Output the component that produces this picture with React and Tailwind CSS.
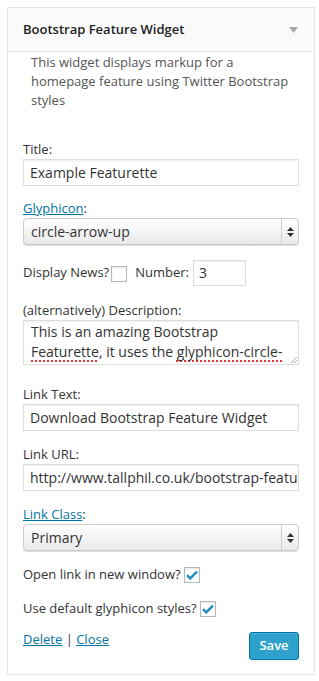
import React from 'react';

const font = { fontFamily: '"Open Sans", "Liberation Sans", sans-serif' };

const Label = ({ children, className = '' }) => (
  <div className={`text-[13px] leading-[19px] text-[#333] ${className}`}>{children}</div>
);

const TextInput = ({ value }) => (
  <div className="h-[27px] w-full border border-[#dddddd] bg-white px-[6px] text-[14px] leading-[25px] text-[#333] shadow-[inset_0_1px_2px_rgba(0,0,0,0.07)] whitespace-nowrap overflow-hidden">
    {value}
  </div>
);

const SelectBox = ({ value }) => (
  <div className="flex h-[27px] w-full items-stretch rounded-[4px] border border-[#cccccc] bg-gradient-to-b from-white to-[#e9e9e9] shadow-[0_1px_1px_rgba(0,0,0,0.15)]">
    <div className="flex-1 px-[7px] text-[14px] leading-[25px] text-[#333]">{value}</div>
    <div className="flex w-[17px] flex-col items-center justify-center gap-[2px] border-l border-[#cfcfcf]">
      <svg width="7" height="4" viewBox="0 0 7 4"><path d="M3.5 0L7 4H0z" fill="#333" /></svg>
      <svg width="7" height="4" viewBox="0 0 7 4"><path d="M0 0h7L3.5 4z" fill="#333" /></svg>
    </div>
  </div>
);

const Checkbox = ({ checked }) => (
  <span className="inline-flex h-[16px] w-[16px] items-center justify-center border border-[#b4b9be] bg-white shadow-[inset_0_1px_2px_rgba(0,0,0,0.1)]">
    {checked && (
      <svg width="12" height="10" viewBox="0 0 12 10">
        <path d="M1 5.2l3.2 3.2L11 1.6" fill="none" stroke="#1e8cbe" strokeWidth="2.4" />
      </svg>
    )}
  </span>
);

export default function App() {
  return (
    <div className="min-h-screen bg-white pt-[7px] px-[7px] pr-[4px]" style={font}>
      <div className="w-[308px] border border-[#e5e5e5] bg-white">
        <div className="flex h-[44px] items-center justify-between border-b border-[#e5e5e5] bg-[#fafafa] pl-[15px] pr-[16px]">
          <span className="text-[13px] font-semibold text-[#222]">Bootstrap Feature Widget</span>
          <svg width="9" height="6" viewBox="0 0 9 6"><path d="M0 0h9L4.5 6z" fill="#a8a8a8" /></svg>
        </div>

        <div className="px-[15px] pb-[14px]">
          <p className="mt-[1px] pl-[8px] text-[13px] leading-[19px] text-[#555]">
            This widget displays markup for a homepage feature using Twitter Bootstrap styles
          </p>

          <Label className="mt-[30px]">Title:</Label>
          <TextInput value="Example Featurette" />

          <Label className="mt-[13px]">
            <a className="text-[#0074a2] underline">Glyphicon</a>:
          </Label>
          <SelectBox value="circle-arrow-up" />

          <div className="mt-[15px] flex h-[26px] items-center text-[13px] text-[#333]">
            <span>Display News?</span>
            <span className="ml-[2px] mt-[1px] flex"><Checkbox /></span>
            <span className="ml-[8px]">Number:</span>
            <div className="ml-[4px] h-[26px] w-[53px] border border-[#dddddd] px-[5px] text-[14px] leading-[24px] shadow-[inset_0_1px_2px_rgba(0,0,0,0.07)]">
              3
            </div>
          </div>

          <Label className="mt-[15px]">(alternatively) Description:</Label>
          <div className="relative h-[45px] w-full overflow-hidden border border-[#dddddd] px-[7px] pt-[1px] text-[14px] leading-[20px] text-[#333] shadow-[inset_0_1px_2px_rgba(0,0,0,0.07)]">
            This is an amazing Bootstrap{' '}
            <span className="underline decoration-dotted decoration-[#e33] decoration-2 underline-offset-[3px]">Featurette</span>, it uses the{' '}
            <span className="underline decoration-dotted decoration-[#e33] decoration-2 underline-offset-[3px]">glyphicon-circle-</span>arrow-up
            <svg className="absolute bottom-0 right-0" width="8" height="8" viewBox="0 0 8 8">
              <path d="M7 1L1 7M7 4L4 7" stroke="#999" strokeWidth="0.8" />
            </svg>
          </div>

          <Label className="mt-[20px]">Link Text:</Label>
          <TextInput value="Download Bootstrap Feature Widget" />

          <Label className="mt-[14px]">Link URL:</Label>
          <TextInput value="http://www.tallphil.co.uk/bootstrap-feature-widget/" />

          <Label className="mt-[14px]">
            <a className="text-[#0074a2] underline">Link Class</a>:
          </Label>
          <SelectBox value="Primary" />

          <div className="mt-[14px] flex items-center text-[13px] leading-[19px] text-[#333]">
            <span>Open link in new window?</span>
            <span className="ml-[3px] flex"><Checkbox checked /></span>
          </div>

          <div className="mt-[15px] flex items-center text-[13px] leading-[19px] text-[#333]">
            <span>Use default glyphicon styles?</span>
            <span className="ml-[3px] flex"><Checkbox checked /></span>
          </div>

          <div className="mt-[12px] flex items-start justify-between">
            <div className="text-[13px] leading-[19px] text-[#333]">
              <a className="text-[#0074a2] underline">Delete</a> | <a className="text-[#0074a2] underline">Close</a>
            </div>
            <button className="mt-[2px] h-[28px] w-[50px] rounded-[3px] border border-[#0074a2] bg-[#2ea2cc] text-[13px] font-semibold text-white shadow-[inset_0_1px_0_rgba(120,200,230,0.5)]">
              Save
            </button>
          </div>
        </div>
      </div>
    </div>
  );
}
